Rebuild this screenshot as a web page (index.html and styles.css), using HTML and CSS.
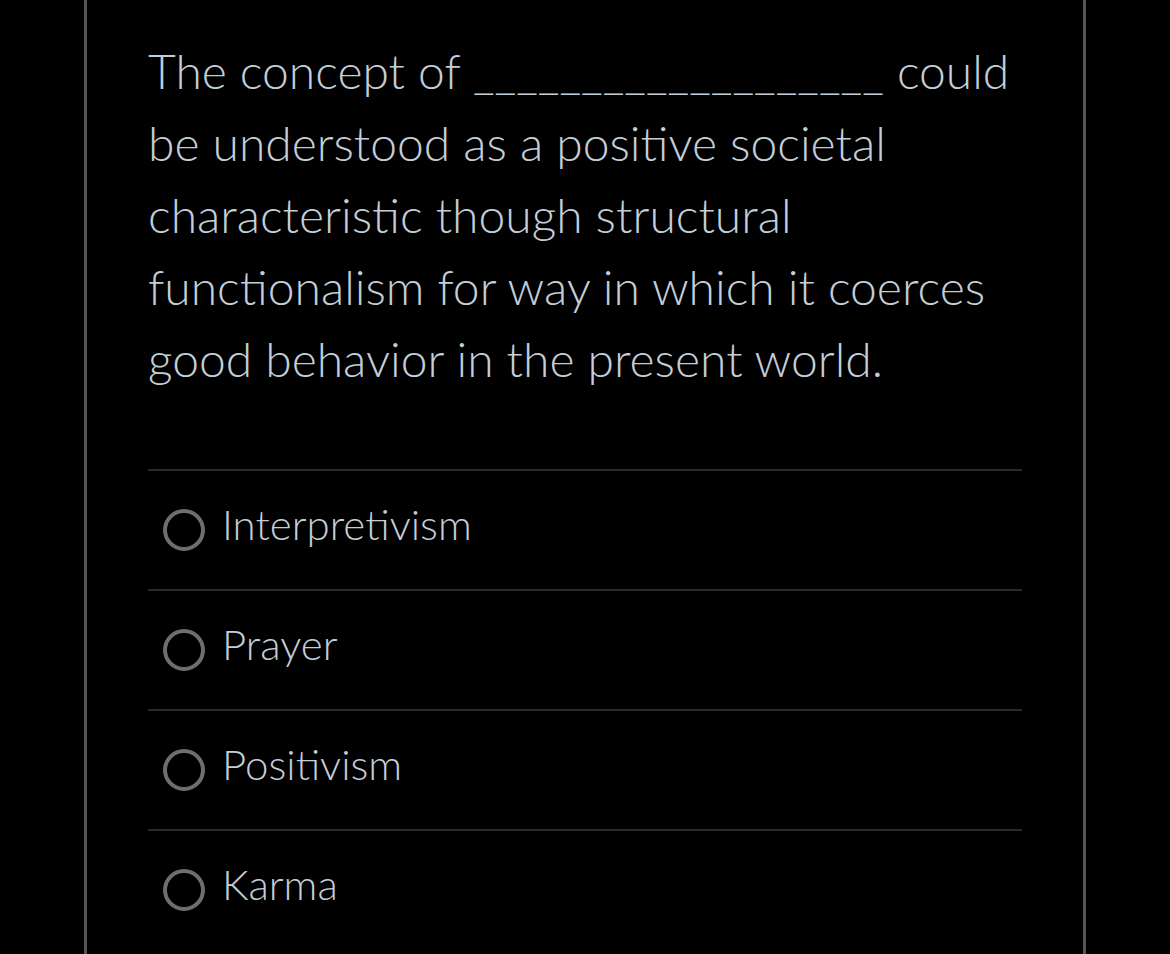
FILE: index.html
```html
<!DOCTYPE html>
<html lang="en">
<head>
<meta charset="utf-8">
<title>Question</title>
<link rel="stylesheet" href="styles.css">
</head>
<body>
<main class="card">
  <p class="question">The concept of <span class="blank">___________________</span> could<br>be understood as a positive societal<br>characteristic though structural<br>functionalism for way in which it coerces<br>good behavior in the present world.</p>
  <ul class="options">
    <li class="option"><span class="radio"></span><span class="label">Interpretivism</span></li>
    <li class="option"><span class="radio"></span><span class="label">Prayer</span></li>
    <li class="option"><span class="radio"></span><span class="label">Positivism</span></li>
    <li class="option"><span class="radio"></span><span class="label">Karma</span></li>
  </ul>
</main>
</body>
</html>
```
FILE: styles.css
```css
html, body {
  margin: 0;
  padding: 0;
  background: #000;
  height: 100%;
  overflow: hidden;
}
.card {
  box-sizing: border-box;
  margin-left: 84px;
  width: 1002px;
  min-height: 100vh;
  border-left: 3px solid #555557;
  border-right: 3px solid #555557;
  padding: 35px 61px 0 61px;
  font-family: Lato, "Open Sans", sans-serif;
  font-weight: 300;
  color: #c3ced8;
}
.question {
  margin: 0;
  font-size: 48px;
  line-height: 72px;
}
.options {
  list-style: none;
  margin: 74px 0 0 0;
  padding: 0;
}
.option {
  display: flex;
  align-items: center;
  height: 118px;
  border-top: 2px solid #2a2a2c;
  padding-left: 15px;
}
.radio {
  box-sizing: border-box;
  width: 42px;
  height: 42px;
  border-radius: 50%;
  border: 4px solid #6e6e71;
  flex: none;
}
.label {
  margin-left: 17px;
  margin-bottom: 12px;
  font-size: 42px;
}
```
